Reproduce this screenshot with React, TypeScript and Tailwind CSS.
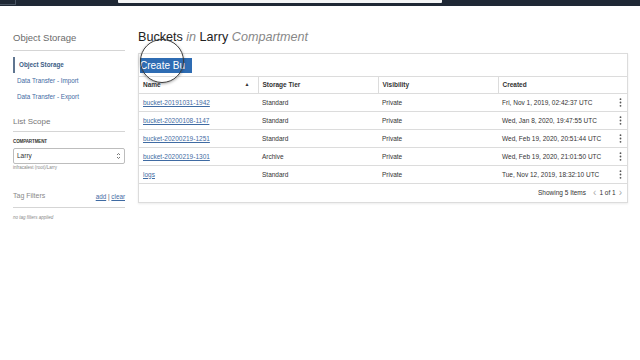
import React from 'react';

const rows = [
    { name: 'bucket-20191031-1942', tier: 'Standard', vis: 'Private', created: 'Fri, Nov 1, 2019, 02:42:37 UTC' },
    { name: 'bucket-20200108-1147', tier: 'Standard', vis: 'Private', created: 'Wed, Jan 8, 2020, 19:47:55 UTC' },
    { name: 'bucket-20200219-1251', tier: 'Standard', vis: 'Private', created: 'Wed, Feb 19, 2020, 20:51:44 UTC' },
    { name: 'bucket-20200219-1301', tier: 'Archive', vis: 'Private', created: 'Wed, Feb 19, 2020, 21:01:50 UTC' },
    { name: 'logs', tier: 'Standard', vis: 'Private', created: 'Tue, Nov 12, 2019, 18:32:10 UTC' },
];

const Kebab = () => (
    <svg width="3" height="9" viewBox="0 0 3 9" className="fill-[#555]">
        <circle cx="1.5" cy="1.2" r="0.9" />
        <circle cx="1.5" cy="4.5" r="0.9" />
        <circle cx="1.5" cy="7.8" r="0.9" />
    </svg>
);

const App: React.FC = () => {
    return (
        <div className="relative w-[640px] h-[360px] overflow-hidden bg-white text-[#333]" style={{ fontFamily: '"Liberation Sans", Arial, sans-serif' }}>
            {/* Top bar */}
            <div className="h-[6px] bg-[#1f2835] flex items-start">
                <div className="w-[16px] h-[5px] border-r border-b border-[#4a5563]" />
                <div className="ml-[102px] w-[324px] h-[3px] bg-[#f4f5f6] rounded-b-[1px]" />
            </div>

            <div className="flex">
                {/* Sidebar */}
                <div className="ml-[13px] w-[112px] pt-[26px]">
                    <div className="text-[9.5px] leading-[12px] text-[#6b6b6b] font-light pb-[6px] border-b border-[#d5d5d5]">Object Storage</div>
                    <div className="mt-[6px] text-[6.3px]">
                        <div className="h-[16px] flex items-center pl-[4px] border-l-2 border-[#5f7590] font-bold text-[#3d5e86]">Object Storage</div>
                        <div className="h-[16px] flex items-center pl-[4px] text-[#3f6ba3]">Data Transfer - Import</div>
                        <div className="h-[16px] flex items-center pl-[4px] text-[#3f6ba3]">Data Transfer - Export</div>
                    </div>

                    <div className="mt-[12px] text-[8px] leading-[10px] text-[#777] pb-[4px] border-b border-[#d5d5d5]">List Scope</div>
                    <div className="mt-[7px] text-[4.5px] font-bold tracking-tight text-[#333]">COMPARTMENT</div>
                    <div className="mt-[2px] h-[16px] border border-[#bdbdbd] rounded-[2px] flex items-center justify-between px-[3px] text-[6.5px]">
                        <span>Larry</span>
                        <svg width="5" height="8" viewBox="0 0 5 8" fill="none" stroke="#555" strokeWidth="0.8">
                            <path d="M1 3 L2.5 1.5 L4 3" />
                            <path d="M1 5 L2.5 6.5 L4 5" />
                        </svg>
                    </div>
                    <div className="mt-[1px] text-[4.5px] text-[#888]">infracalest (root)/Larry</div>

                    <div className="mt-[19px] flex items-end justify-between pb-[6px] border-b border-[#d5d5d5]">
                        <span className="text-[7px] text-[#888]">Tag Filters</span>
                        <span className="text-[6.3px] text-[#3f6ba3]"><span className="underline">add</span> <span className="text-[#555]">|</span> <span className="underline">clear</span></span>
                    </div>
                    <div className="mt-[7px] text-[4.5px] italic text-[#888]">no tag filters applied</div>
                </div>

                {/* Main */}
                <div className="ml-[13px] w-[490px] pt-[23px]">
                    <h1 className="text-[12.6px] leading-[16px] text-[#222]">
                        Buckets <span className="italic text-[#888]">in</span> Larry <span className="italic text-[#888]">Compartment</span>
                    </h1>

                    <div className="mt-[8px] border border-[#dcdcdc] shadow-[0_1px_2px_rgba(0,0,0,0.08)]">
                        <div className="h-[22px] pt-[4px] pl-[1px]">
                            <div className="w-[52px] h-[15px] bg-[#2e6cb3] whitespace-nowrap flex items-center text-white text-[10px] leading-none">
                                Create Bu
                            </div>
                        </div>

                        <table className="w-full border-collapse text-[6.5px]">
                            <thead>
                                <tr className="h-[17px] border-y border-[#dcdcdc] font-bold text-left">
                                    <th className="w-[119px] px-[4px] border-r border-[#dcdcdc]">
                                        <div className="flex items-center justify-between">
                                            <span>Name</span>
                                            <span className="text-[5px] mr-[4px]">▲</span>
                                        </div>
                                    </th>
                                    <th className="w-[120px] px-[4px] border-r border-[#dcdcdc]">Storage Tier</th>
                                    <th className="w-[120px] px-[4px] border-r border-[#dcdcdc]">Visibility</th>
                                    <th className="px-[4px]">Created</th>
                                </tr>
                            </thead>
                            <tbody>
                                {rows.map((r) => (
                                    <tr key={r.name} className="h-[18px] border-b border-[#dcdcdc]">
                                        <td className="px-[4px] text-[#3f6ba3] underline">{r.name}</td>
                                        <td className="px-[4px]">{r.tier}</td>
                                        <td className="px-[4px]">{r.vis}</td>
                                        <td className="px-[4px]">
                                            <div className="flex items-center justify-between pr-[1px]">
                                                <span>{r.created}</span>
                                                <Kebab />
                                            </div>
                                        </td>
                                    </tr>
                                ))}
                            </tbody>
                        </table>

                        <div className="h-[18px] flex items-center justify-end gap-[7px] pr-[5px] text-[6.5px]">
                            <span>Showing 5 Items</span>
                            <span className="flex items-center gap-[3px]">
                                <span className="text-[#aaa] text-[10px] leading-none">‹</span>
                                <span>1 of 1</span>
                                <span className="text-[#aaa] text-[10px] leading-none">›</span>
                            </span>
                        </div>
                    </div>
                </div>
            </div>

            {/* Magnifier lens from the screen recording */}
            <div className="absolute left-[140px] top-[39px] w-[44px] h-[44px] rounded-full border border-[#3a3a3a] shadow-[0_1px_3px_rgba(0,0,0,0.35)]" />
        </div>
    );
};

export default App;
